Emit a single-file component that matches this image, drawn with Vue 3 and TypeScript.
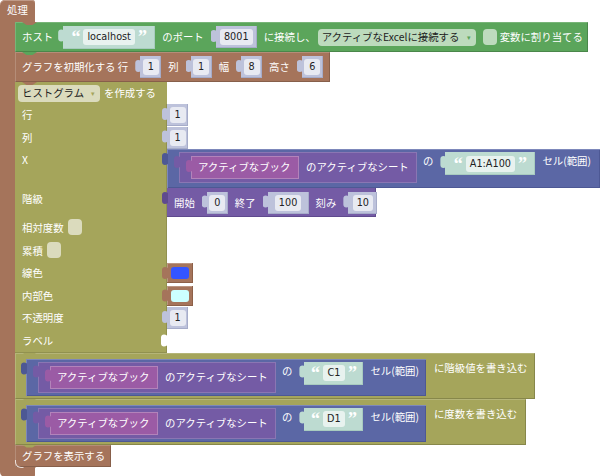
<script setup lang="ts">
interface HistRow {
  label: string
  kind: 'num' | 'check' | 'color' | 'none'
  value?: string
  swatch?: string
}

// 行/列 の入力と、X・階級の下に続く入力を分けて持つ
const topRows: HistRow[] = [
  { label: '行', kind: 'num', value: '1' },
  { label: '列', kind: 'num', value: '1' },
]

const bottomRows: HistRow[] = [
  { label: '相対度数', kind: 'check' },
  { label: '累積', kind: 'check' },
  { label: '線色', kind: 'color', swatch: '#3355ff' },
  { label: '内部色', kind: 'color', swatch: '#ccffff' },
  { label: '不透明度', kind: 'num', value: '1' },
  { label: 'ラベル', kind: 'none' },
]

const writers = [
  { cell: 'C1', text: 'に階級値を書き込む' },
  { cell: 'D1', text: 'に度数を書き込む' },
]
</script>

<template>
  <div class="workspace">
    <div class="proc">
      <div class="proc-head">処理</div>
      <div class="proc-body">
        <div class="proc-arm"></div>
        <div class="stack">
          <!-- 接続 -->
          <div class="block green notch">
            <span class="t">ホスト</span>
            <span class="str tab host"><i class="q">“</i><b class="in">localhost</b><i class="q">”</i></span>
            <span class="t">のポート</span>
            <span class="num tab wide"><b class="in">8001</b></span>
            <span class="t">に接続し、</span>
            <span class="drop excel">アクティブなExcelに接続する<i class="arrow">▾</i></span>
            <span class="check"></span>
            <span class="t assign">変数に割り当てる</span>
          </div>

          <!-- 初期化 -->
          <div class="block brown notch init">
            <span class="t">グラフを初期化する 行</span>
            <span class="num tab"><b class="in">1</b></span>
            <span class="t">列</span>
            <span class="num tab"><b class="in">1</b></span>
            <span class="t">幅</span>
            <span class="num tab"><b class="in">8</b></span>
            <span class="t">高さ</span>
            <span class="num tab"><b class="in">6</b></span>
          </div>

          <!-- ヒストグラム -->
          <div class="hist notch">
            <div class="hist-head olive">
              <span class="drop">ヒストグラム<i class="arrow">▾</i></span>
              <span class="t">を作成する</span>
            </div>

            <div v-for="row in topRows" :key="row.label" class="hist-row">
              <div class="cell olive"><span class="t">{{ row.label }}</span></div>
              <span class="num tab side"><b class="in">{{ row.value }}</b></span>
            </div>

            <div class="hist-row">
              <div class="cell olive"><span class="t">X</span></div>
              <div class="range tab x-range">
                <div class="sheet tab">
                  <div class="book tab"><span class="t">アクティブなブック</span></div>
                  <span class="t">のアクティブなシート</span>
                </div>
                <span class="t of">の</span>
                <span class="str tab long"><i class="q">“</i><b class="in">A1:A100</b><i class="q">”</i></span>
                <span class="t cell-label">セル(範囲)</span>
              </div>
            </div>

            <div class="hist-row">
              <div class="cell olive"><span class="t">階級</span></div>
              <div class="steps tab">
                <span class="t">開始</span>
                <span class="num tab"><b class="in">0</b></span>
                <span class="t">終了</span>
                <span class="num tab wide"><b class="in">100</b></span>
                <span class="t">刻み</span>
                <span class="num tab mid"><b class="in">10</b></span>
              </div>
            </div>

            <div v-for="row in bottomRows" :key="row.label" class="hist-row">
              <div class="cell olive" :class="{ socket: row.kind === 'none' }">
                <span class="t">{{ row.label }}</span>
                <span v-if="row.kind === 'check'" class="check"></span>
              </div>
              <span v-if="row.kind === 'num'" class="num tab side"><b class="in">{{ row.value }}</b></span>
              <span v-if="row.kind === 'color'" class="color tab"><i class="swatch" :style="{ background: row.swatch }"></i></span>
            </div>
          </div>

          <!-- 書き込み -->
          <div v-for="w in writers" :key="w.cell" class="block olive notch writer">
            <div class="range tab">
              <div class="sheet tab">
                <div class="book tab"><span class="t">アクティブなブック</span></div>
                <span class="t">のアクティブなシート</span>
              </div>
              <span class="t of">の</span>
              <span class="str tab cell-str"><i class="q">“</i><b class="in">{{ w.cell }}</b><i class="q">”</i></span>
              <span class="t cell-label">セル(範囲)</span>
            </div>
            <span class="t writer-label">{{ w.text }}</span>
          </div>

          <div class="block brown notch show"><span class="t">グラフを表示する</span></div>
        </div>
      </div>
      <div class="proc-foot"></div>
    </div>
  </div>
</template>

<style>
html,
body {
  margin: 0;
  background: #fff;
}
</style>

<style scoped>
.workspace {
  width: 600px;
  height: 476px;
  overflow: hidden;
  background: #fff;
  font-family: "Noto Sans CJK JP", "Open Sans", sans-serif;
  font-size: 10.4px;
  line-height: 14px;
  color: #fff;
}

.t {
  white-space: nowrap;
}

/* outer C block */
.proc-head {
  width: 35px;
  height: 22px;
  box-sizing: border-box;
  padding: 3px 0 0 7px;
  background: #a5745b;
  border-top-right-radius: 3px;
  border-top-left-radius: 5px;
  box-shadow: inset 0 1px 0 #c09a88;
}
.proc-body {
  display: flex;
}
.proc-arm {
  flex: none;
  width: 15px;
  background: #a5745b;
}
.stack {
  position: relative;
  flex: none;
  width: 585px;
}
.stack::before {
  content: "";
  position: absolute;
  z-index: 2;
  left: 7px;
  top: 0;
  width: 15px;
  height: 3px;
  background: #a5745b;
  clip-path: polygon(0 0, 100% 0, 70% 100%, 30% 100%);
}
.proc-foot {
  width: 35px;
  height: 10px;
  background: #a5745b;
  border-bottom-left-radius: 5px;
  border-bottom-right-radius: 2px;
}

/* statement blocks */
.block {
  box-sizing: border-box;
  display: flex;
  width: fit-content;
  align-items: center;
  gap: 7px;
  padding-left: 7px;
  box-shadow: inset 1px 1px 0 rgba(255, 255, 255, 0.18), inset -1px -1px 0 rgba(0, 0, 0, 0.18);
}
.notch {
  position: relative;
}
.notch::after {
  content: "";
  position: absolute;
  z-index: 2;
  left: 7px;
  bottom: -3px;
  width: 15px;
  height: 3px;
  background: var(--c);
  clip-path: polygon(0 0, 100% 0, 70% 100%, 30% 100%);
}
.green {
  --c: #5ba55b;
  background: #5ba55b;
  height: 30px;
  width: 573px;
}
.brown {
  --c: #a5745b;
  background: #a5745b;
}
.olive {
  --c: #a5a55b;
  background: #a5a55b;
}
.init {
  height: 30px;
  width: 315px;
}
.show {
  height: 22px;
  width: 96px;
}
.show::before {
  content: "";
  position: absolute;
  left: 0;
  bottom: -1px;
  width: 9px;
  height: 8px;
  box-sizing: border-box;
  border-left: 1px solid rgba(255, 255, 255, 0.75);
  border-bottom: 1px solid rgba(255, 255, 255, 0.75);
  border-bottom-left-radius: 6px;
}
.str.host {
  width: 92px;
  margin-left: 3px;
}
.excel {
  box-sizing: border-box;
  width: 158px;
  margin-left: -5px;
}
.assign {
  margin-left: -4px;
}

/* value blocks */
.tab {
  position: relative;
}
.tab::before {
  content: "";
  position: absolute;
  left: -5px;
  top: 3px;
  width: 6px;
  height: 14px;
  background: var(--tab);
  clip-path: path("M6 0V2C3 0 0 1 0 4V10C0 13 3 14 6 12V14H6Z");
}
.num {
  --tab: #bdc2db;
  flex: none;
  box-sizing: border-box;
  display: inline-flex;
  align-items: center;
  justify-content: center;
  height: 22px;
  width: 21px;
  margin-left: 5px;
  background: #bdc2db;
  box-shadow: inset -1px -1px 0 #a6acc9;
}
.num.wide {
  width: 41px;
}
.num.mid {
  width: 29px;
}
.num.side {
  margin-left: 0;
}
.in {
  display: block;
  padding: 0 4px;
  height: 16px;
  line-height: 16px;
  min-width: 8px;
  text-align: center;
  font-family: "DejaVu Sans", sans-serif;
  font-size: 9.7px;
  font-weight: 400;
  color: #222;
  border-radius: 3px;
  background: rgba(255, 255, 255, 0.65);
}
.str {
  --tab: #bddbd1;
  flex: none;
  box-sizing: border-box;
  display: inline-flex;
  align-items: center;
  justify-content: center;
  gap: 3px;
  height: 23px;
  margin-left: 5px;
  padding: 0 6px;
  background: #bddbd1;
  box-shadow: inset -1px -1px 0 #a8cbbf;
}
.q {
  font-family: "Liberation Serif", serif;
  font-style: normal;
  font-weight: 700;
  font-size: 18px;
  line-height: 18px;
  height: 18px;
  color: #fff;
}
.check {
  flex: none;
  display: inline-block;
  width: 14px;
  height: 16px;
  border-radius: 4px;
  background: rgba(255, 255, 255, 0.6);
}
.drop {
  flex: none;
  display: inline-flex;
  align-items: center;
  justify-content: space-between;
  gap: 7px;
  height: 17px;
  padding: 0 5px 0 4px;
  border-radius: 4px;
  color: #222;
  background: rgba(255, 255, 255, 0.6);
}
.arrow {
  font-style: normal;
  font-size: 7px;
  color: #5ba55b;
}

/* histogram */
.hist-head {
  display: flex;
  align-items: center;
  gap: 4px;
  box-sizing: border-box;
  width: 152px;
  height: 22px;
  padding-left: 3px;
}
.hist {
  --c: #a5a55b;
}
.hist-head .arrow {
  color: #a5a55b;
}
.hist-row {
  display: flex;
  align-items: flex-start;
}
.cell {
  position: relative;
  flex: none;
  box-sizing: border-box;
  display: flex;
  align-items: flex-start;
  gap: 4px;
  width: 152px;
  min-height: 22.5px;
  padding: 4px 0 0 7px;
  align-self: stretch;
  box-shadow: inset -1px 0 0 rgba(0, 0, 0, 0.12);
}
.cell .check {
  margin-top: -2px;
}
.socket {
  padding-bottom: 5px;
  box-shadow: inset -1px -1px 0 rgba(0, 0, 0, 0.12);
}
.socket::after {
  content: "";
  position: absolute;
  right: 0;
  top: 4px;
  width: 6px;
  height: 14px;
  background: #fff;
  clip-path: path("M6 0V2C3 0 0 1 0 4V10C0 13 3 14 6 12V14H6Z");
}
.color {
  --tab: #a5745b;
  flex: none;
  box-sizing: border-box;
  display: flex;
  align-items: center;
  justify-content: center;
  width: 26px;
  height: 20px;
  margin-top: 1px;
  background: #a5745b;
  box-shadow: inset -1px -1px 0 #8d6048, inset 1px 1px 0 #bb9682;
}
.swatch {
  display: block;
  width: 18px;
  height: 12px;
  border-radius: 3px;
}
.range {
  --tab: #4d5894;
  flex: none;
  box-sizing: border-box;
  display: flex;
  align-items: flex-start;
  height: 37px;
  padding: 3px 0 0 12px;
  background: #5b67a5;
  box-shadow: inset 1px 1px 0 #7d88bb, inset -1px -1px 0 #4d5894;
}
.x-range {
  width: 433px;
  height: 39px;
}
.sheet {
  --tab: #745ba5;
  flex: none;
  box-sizing: border-box;
  display: flex;
  width: 238px;
  height: 31px;
  padding: 4px 0 0 12px;
  gap: 7px;
  background: #745ba5;
  box-shadow: inset 0 0 0 1px #8a76b3;
}
.book {
  --tab: #9b5ba5;
  flex: none;
  box-sizing: border-box;
  width: 108px;
  height: 23px;
  padding: 4px 0 0 7px;
  background: #9b5ba5;
  box-shadow: inset 0 0 0 1px #b283ba;
}
.sheet > .t {
  padding-top: 4px;
}
.of {
  padding: 2px 0 0 6px;
}
.range .str {
  margin-left: 12px;
}
.str.long {
  width: 90px;
}
.str.cell-str {
  width: 59px;
  padding: 0;
}
.cell-str .in {
  min-width: 14px;
}
.cell-label {
  padding: 2px 7px 0 7px;
}
.steps {
  --tab: #5f4a8e;
  flex: none;
  box-sizing: border-box;
  display: flex;
  align-items: center;
  gap: 7px;
  width: 209px;
  height: 29px;
  padding-left: 7px;
  background: #745ba5;
  box-shadow: inset -1px -1px 0 #5f4a8e;
}
.writer {
  width: 520px;
  height: 46px;
  align-items: flex-start;
  gap: 8px;
  padding: 6px 0 0 11px;
}
.writer + .writer {
  width: 511px;
}
.writer-label {
  padding-top: 2px;
}
</style>
